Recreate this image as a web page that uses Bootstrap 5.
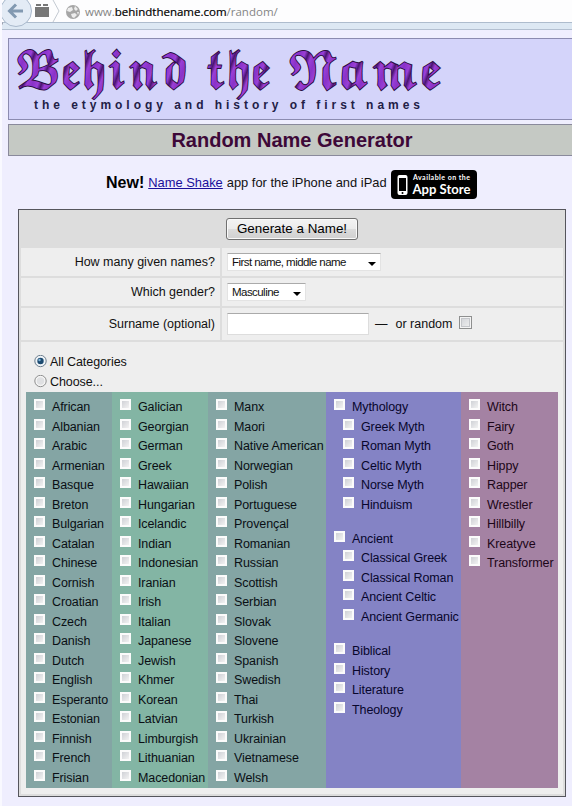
<!DOCTYPE html>
<html lang="en">

<head>
    <meta charset="UTF-8">
    <meta name="viewport" content="width=device-width, initial-scale=1.0">
    <link href="https://cdn.jsdelivr.net/npm/bootstrap@5.3.3/dist/css/bootstrap.min.css" rel="stylesheet">
    <script src="https://cdn.jsdelivr.net/npm/bootstrap@5.3.3/dist/js/bootstrap.bundle.min.js"></script>
    <title>Random Name Generator</title>
    <style>
        body {
            background-color: #efeefe;
            color: #111;
            font-family: "Liberation Sans", Arial, sans-serif;
            font-size: 12.5px;
            line-height: 16px;
            height: 806px;
            overflow: hidden;
            border-left: 2px solid #f9f9ff;
        }
        .toolbar {
            height: 30px;
            margin-left: -2px;
            background: linear-gradient(#fdfdfe 0 22px, #aebccd 22px 23px, #dde8f3 23px 29px, #b3bfd0 29px);
        }
        .toolbar svg {
            flex: none;
        }
        .address {
            font-family: "Open Sans", sans-serif;
            font-size: 11.5px;
            line-height: 24px;
            color: #858585;
            white-space: nowrap;
            padding-left: 1px;
        }
        .address b {
            font-weight: 400;
            color: #000;
            -webkit-text-stroke: .2px #000;
        }
        .page {
            margin: 8px 0 0 6px;
        }
        .masthead {
            height: 82px;
            background-color: #d4d4fa;
            border: 1px solid #8b8bb0;
            border-right: 0;
        }
        .page-title {
            height: 32px;
            margin-top: 4px;
            padding-left: 3px;
            background-color: #c5c9c4;
            border: 1px solid #8a8a9c;
            border-right: 0;
            color: #3d0838;
            font-size: 20px;
            font-weight: 700;
            line-height: 31px;
        }
        .app-line {
            height: 53px;
            padding-left: 98px;
            font-size: 12.9px;
            white-space: nowrap;
        }
        .app-line b {
            font-size: 16px;
            color: #000;
        }
        .app-line a {
            color: #1a0f9a;
        }
        .store {
            width: 86px;
            height: 29px;
            margin: 3px 0 0 4px;
            border-radius: 4px;
            background-color: #000;
        }
        .generator {
            width: 548px;
            height: 588px;
            margin-left: 10px;
            padding: 0 2px;
            border: 1px solid #55555c;
            background-color: #ddd;
        }
        .form-line {
            display: grid;
            grid-template-columns: 199px 1fr;
            gap: 2px;
            margin-bottom: 2px;
        }
        .form-line > div {
            display: flex;
            align-items: center;
            background-color: #eee;
        }
        .form-line > div:first-child {
            justify-content: flex-end;
            padding-right: 5px;
        }
        .form-line > div:last-child {
            padding-left: 5px;
        }
        .submit-line {
            height: 38px;
            padding-top: 8px;
        }
        .short-line {
            height: 28px;
        }
        .tall-line {
            height: 32px;
        }
        .generate {
            width: 132px;
            height: 22px;
            border: 1px solid #707070;
            border-radius: 3px;
            background: linear-gradient(#f3f3f3, #ebebeb 50%, #dcdcdc 50%, #d0d0d0);
            box-shadow: inset 0 0 0 1px #fafafa;
            font-size: 13.4px;
            line-height: 20px;
        }
        .picker {
            width: 154px;
            height: 18px;
            padding: 0 4px;
            background-color: #fff;
            border: 1px solid #e3e3e3;
            border-top-color: #aaa;
            font-size: 11.5px;
            letter-spacing: -.55px;
        }
        .picker-short {
            width: 79px;
        }
        .picker svg {
            margin-top: 3px;
        }
        .surname {
            width: 142px;
            height: 22px;
            margin-right: 6px;
            background-color: #fff;
            border: 1px solid #ddd;
            border-top-color: #aaa;
        }
        .tick {
            flex: none;
            width: 11px;
            height: 11px;
            border: 2px solid #fbfbfb;
            background: linear-gradient(135deg, #cfd1d6, #f2f2f2);
        }
        .tick-dark {
            width: 13px;
            height: 13px;
            margin: 0 0 3px 7px;
            border: 1px solid #8e8f8f;
            box-shadow: inset 0 0 0 1px #f4f4f4, inset 0 0 0 2px #c4c6ca;
        }
        .choices {
            height: 452px;
            padding: 10px 5px 0;
            background-color: #eee;
        }
        .scope {
            height: 40px;
            padding-left: 8px;
            letter-spacing: -.08px;
        }
        .scope label {
            height: 20px;
            gap: 3px;
        }
        .scope svg {
            margin-bottom: 2px;
        }
        .categories {
            display: grid;
            grid-template-columns: 86px 96px 118px 135px 97px;
            height: 396px;
            color: #0a0f14;
        }
        .categories > div {
            padding: 4px 0 0 8px;
        }
        .teal { background-color: #84a5a4; }
        .green { background-color: #83b5a4; }
        .blue { background-color: #8483c5; color: #08062c; }
        .mauve { background-color: #a482a3; color: #1c0618; }
        .entry {
            display: flex;
            gap: 7px;
            height: 19.53px;
            padding-top: 3px;
            line-height: 16px;
            letter-spacing: -.1px;
            white-space: nowrap;
        }
        .entry.sub {
            margin-left: 9px;
        }
        .entry.break {
            margin-top: 14.7px;
        }
    </style>
</head>

<body>
    <div class="toolbar d-flex">
        <svg width="84" height="30" viewBox="0 0 84 30">
            <path d="M0 17v9l3-2z" fill="#8d8d99" />
            <circle cx="16" cy="11" r="15.5" fill="#e3ebf5" stroke="#a9b9cc" />
            <path d="M23 11H10M16 4.500L9.500 11l6.500 6.500" fill="none" stroke="#8299b1" stroke-width="3" />
            <path d="M35 7h14v10H35zM36 4h5v2h-5zM43 4h5v2h-5z" fill="#777" />
            <path d="M53 0l6 11-6 11" fill="none" stroke="#c3c9d1" />
            <circle cx="73" cy="12" r="7" fill="#a6a6a6" />
            <path d="M68 8l4-1 1 3-3 2-3-1zM75 6l3 3-2 2-2-2zM71 14l4-1 2 2-3 3-2-1zM77 12l2 0-1 3z" fill="#ededed" />
        </svg>
        <div class="address">www.<b>behindthename.com</b>/random/</div>
    </div>

    <div class="page">
        <div class="masthead">
            <svg class="d-block" width="560" height="80" viewBox="9 39 560 80">
                <defs>
                    <linearGradient id="ink" x1="0" y1="0" x2="8" y2="3" gradientUnits="userSpaceOnUse" spreadMethod="reflect">
                        <stop offset="0" stop-color="#4a1470" />
                        <stop offset=".4" stop-color="#9a3fd6" />
                        <stop offset="1" stop-color="#8a32c8" />
                    </linearGradient>
                </defs>
                <g font-family="'DejaVu Math TeX Gyre', 'DejaVu Sans', serif" font-size="48" fill="url(#ink)" stroke="#2a0d40" stroke-width="2" paint-order="stroke">
                    <text x="15" y="88" textLength="173" lengthAdjust="spacingAndGlyphs">𝕭𝖊𝖍𝖎𝖓𝖉</text>
                    <text x="205" y="88" textLength="67" lengthAdjust="spacingAndGlyphs">𝖙𝖍𝖊</text>
                    <text x="287" y="88" textLength="156" lengthAdjust="spacingAndGlyphs">𝕹𝖆𝖒𝖊</text>
                </g>
                <text x="34" y="109" textLength="386" font-size="12" font-weight="700" fill="#222046">the etymology and history of first names</text>
            </svg>
        </div>

        <h1 class="page-title text-center mb-0">Random Name Generator</h1>

        <div class="app-line d-flex align-items-center">
            <b>New!</b>
            <a href="#" class="ms-1">Name Shake</a>
            <span class="ms-1">app for the iPhone and iPad</span>
            <div class="store">
                <svg class="d-block" width="86" height="29" viewBox="0 0 86 29" fill="#fff">
                    <path d="M8.500 5h6a2 2 0 0 1 2 2v16a2 2 0 0 1-2 2h-6a2 2 0 0 1-2-2V7a2 2 0 0 1 2-2zM8 8v13h7V8z" fill-rule="evenodd" />
                    <circle cx="11.500" cy="23" r="1" fill="#000" />
                    <g font-family="Lato, sans-serif">
                        <text x="22" y="9.500" textLength="57" font-size="7" font-weight="700">Available on the</text>
                        <text x="21.500" y="23.500" textLength="58" font-size="13.500" font-weight="700" lengthAdjust="spacingAndGlyphs">App Store</text>
                    </g>
                </svg>
            </div>
        </div>

        <div class="generator">
            <div class="submit-line d-flex justify-content-center">
                <button class="generate p-0">Generate a Name!</button>
            </div>
            <div class="form-line short-line">
                <div>How many given names?</div>
                <div>
                    <div class="picker d-flex align-items-center justify-content-between">
                        First name, middle name
                        <svg width="8" height="4"><path d="M0 0h8L4 4z" /></svg>
                    </div>
                </div>
            </div>
            <div class="form-line short-line">
                <div>Which gender?</div>
                <div>
                    <div class="picker picker-short d-flex align-items-center justify-content-between">
                        Masculine
                        <svg width="8" height="4"><path d="M0 0h8L4 4z" /></svg>
                    </div>
                </div>
            </div>
            <div class="form-line tall-line">
                <div>Surname (optional)</div>
                <div>
                    <div class="surname"></div>
                    <span class="me-1">—</span>
                    <span class="ps-1 ms-n1">or random</span>
                    <i class="tick tick-dark"></i>
                </div>
            </div>
            <div class="choices">
                <div class="scope">
                    <label class="d-flex align-items-center">
                        <svg width="13" height="13"><circle cx="6.500" cy="6" r="5.700" fill="#eef3f7" stroke="#6e7f8e" /><circle cx="6.500" cy="6" r="3.200" fill="#1c4a70" /><circle cx="5.500" cy="5" r="1.200" fill="#7fb4d8" /></svg>
                        All Categories
                    </label>
                    <label class="d-flex align-items-center">
                        <svg width="13" height="13"><circle cx="6.500" cy="6" r="5.700" fill="#f4f4f4" stroke="#8e8f8f" /><circle cx="6.500" cy="6" r="3.700" fill="#dfe0e2" /></svg>
                        Choose...
                    </label>
                </div>
                <div class="categories" id="categories"></div>
            </div>
        </div>
    </div>

    <script>
        // "-" marks an indented entry, "+" starts a new group
        var columns = [
            { color: 'teal', names: ['African', 'Albanian', 'Arabic', 'Armenian', 'Basque', 'Breton', 'Bulgarian', 'Catalan', 'Chinese', 'Cornish', 'Croatian', 'Czech', 'Danish', 'Dutch', 'English', 'Esperanto', 'Estonian', 'Finnish', 'French', 'Frisian'] },
            { color: 'green', names: ['Galician', 'Georgian', 'German', 'Greek', 'Hawaiian', 'Hungarian', 'Icelandic', 'Indian', 'Indonesian', 'Iranian', 'Irish', 'Italian', 'Japanese', 'Jewish', 'Khmer', 'Korean', 'Latvian', 'Limburgish', 'Lithuanian', 'Macedonian'] },
            { color: 'teal', names: ['Manx', 'Maori', 'Native American', 'Norwegian', 'Polish', 'Portuguese', 'Provençal', 'Romanian', 'Russian', 'Scottish', 'Serbian', 'Slovak', 'Slovene', 'Spanish', 'Swedish', 'Thai', 'Turkish', 'Ukrainian', 'Vietnamese', 'Welsh'] },
            { color: 'blue', names: ['Mythology', '-Greek Myth', '-Roman Myth', '-Celtic Myth', '-Norse Myth', '-Hinduism', '+Ancient', '-Classical Greek', '-Classical Roman', '-Ancient Celtic', '-Ancient Germanic', '+Biblical', 'History', 'Literature', 'Theology'] },
            { color: 'mauve', names: ['Witch', 'Fairy', 'Goth', 'Hippy', 'Rapper', 'Wrestler', 'Hillbilly', 'Kreatyve', 'Transformer'] }
        ];

        columns.forEach(function (column) {
            var div = document.createElement('div');
            div.className = column.color;
            column.names.forEach(function (name) {
                var entry = document.createElement('label');
                entry.className = 'entry' + (name[0] == '-' ? ' sub' : '') + (name[0] == '+' ? ' break' : '');
                entry.innerHTML = '<i class="tick"></i><span>' + name.replace(/^[-+]/, '') + '</span>';
                div.appendChild(entry);
            });
            document.getElementById('categories').appendChild(div);
        });
    </script>
</body>

</html>
